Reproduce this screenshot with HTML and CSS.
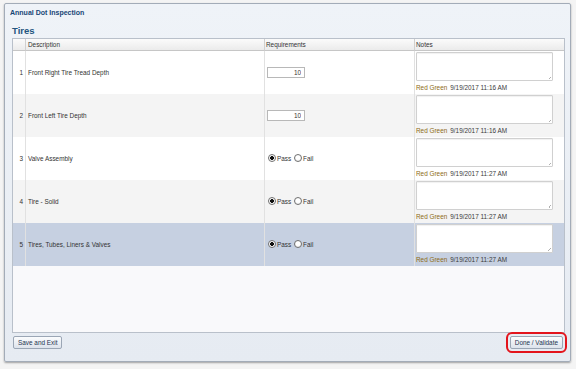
FILE: index.html
```html
<!DOCTYPE html>
<html lang="en">
<head>
    <meta charset="UTF-8">
    <meta name="viewport" content="width=device-width, initial-scale=1.0">
    <title>Annual Dot Inspection</title>
    <link rel="stylesheet" href="styles.css">
</head>
<body>
    <div class="dialog">
        <div class="dialog-title">Annual Dot Inspection</div>
        <h2 class="section-title">Tires</h2>
        <div class="grid-wrap">
            <table class="grid">
                <thead>
                    <tr>
                        <th class="c-num"></th>
                        <th class="c-desc">Description</th>
                        <th class="c-req">Requirements</th>
                        <th class="c-notes">Notes</th>
                    </tr>
                </thead>
                <tbody>
                    <tr>
                        <td class="num">1</td>
                        <td class="desc">Front Right Tire Tread Depth</td>
                        <td class="req"><input type="text" class="req-input" value="10"></td>
                        <td class="notes">
                            <textarea class="note-box"></textarea>
                            <div class="note-meta"><span class="who">Red Green</span><span class="when">9/19/2017 11:16 AM</span></div>
                        </td>
                    </tr>
                    <tr>
                        <td class="num">2</td>
                        <td class="desc">Front Left Tire Depth</td>
                        <td class="req"><input type="text" class="req-input" value="10"></td>
                        <td class="notes">
                            <textarea class="note-box"></textarea>
                            <div class="note-meta"><span class="who">Red Green</span><span class="when">9/19/2017 11:16 AM</span></div>
                        </td>
                    </tr>
                    <tr>
                        <td class="num">3</td>
                        <td class="desc">Valve Assembly</td>
                        <td class="req">
                            <label class="choice"><input type="radio" name="r3" checked>Pass</label>
                            <label class="choice"><input type="radio" name="r3">Fail</label>
                        </td>
                        <td class="notes">
                            <textarea class="note-box"></textarea>
                            <div class="note-meta"><span class="who">Red Green</span><span class="when">9/19/2017 11:27 AM</span></div>
                        </td>
                    </tr>
                    <tr>
                        <td class="num">4</td>
                        <td class="desc">Tire - Solid</td>
                        <td class="req">
                            <label class="choice"><input type="radio" name="r4" checked>Pass</label>
                            <label class="choice"><input type="radio" name="r4">Fail</label>
                        </td>
                        <td class="notes">
                            <textarea class="note-box"></textarea>
                            <div class="note-meta"><span class="who">Red Green</span><span class="when">9/19/2017 11:27 AM</span></div>
                        </td>
                    </tr>
                    <tr class="selected">
                        <td class="num">5</td>
                        <td class="desc">Tires, Tubes, Liners &amp; Valves</td>
                        <td class="req">
                            <label class="choice"><input type="radio" name="r5" checked>Pass</label>
                            <label class="choice"><input type="radio" name="r5">Fail</label>
                        </td>
                        <td class="notes">
                            <textarea class="note-box"></textarea>
                            <div class="note-meta"><span class="who">Red Green</span><span class="when">9/19/2017 11:27 AM</span></div>
                        </td>
                    </tr>
                </tbody>
            </table>
        </div>
        <div class="button-bar">
            <button class="btn">Save and Exit</button>
            <button class="btn btn-flagged">Done / Validate</button>
        </div>
    </div>
</body>
</html>
```

FILE: styles.css
```css
body {
    margin: 0;
    height: 369px;
    background: #f4f4f4;
    font-family: "Liberation Sans", Arial, sans-serif;
    font-size: 6.4px;
    color: #333;
    overflow: hidden;
}
.dialog {
    margin: 3px 0 0 4px;
    width: 567px;
    height: 359px;
    box-sizing: border-box;
    border: 1px solid #a3acb8;
    border-radius: 2px;
    background: linear-gradient(#eff3f8, #e6ebf2);
    box-shadow: 0 1px 2px rgba(0, 0, 0, 0.35);
    display: flex;
    flex-direction: column;
}
.dialog-title {
    padding: 4px 0 0 5px;
    font-size: 7px;
    line-height: 10px;
    font-weight: bold;
    color: #184676;
}
.section-title {
    margin: 7px 0 0 7px;
    font-size: 9.5px;
    line-height: 12px;
    font-weight: bold;
    color: #23557f;
}
.grid-wrap {
    flex: 1;
    margin: 1px 5px 0 7px;
    border: 1px solid #b9c0ca;
    background: #f9f9fb;
    overflow: hidden;
}
.grid {
    width: 100%;
    table-layout: fixed;
    border-collapse: separate;
    border-spacing: 0;
}
.grid th,
.grid td {
    box-sizing: border-box;
    padding: 0;
}
.grid th {
    height: 12px;
    padding-left: 1px;
    line-height: 11px;
    font-weight: normal;
    text-align: left;
    background: linear-gradient(#fbfbfb, #ebebeb);
    border-bottom: 1px solid #c6c6c6;
    border-right: 1px solid #d0d0d0;
}
.grid th:last-child {
    border-right: none;
}
.c-num { width: 13px; }
.c-desc { width: 239px; }
.c-req { width: 150px; }
.grid th.c-desc { padding-left: 2px; }
.grid tbody tr {
    height: 43px;
    background: #fff;
}
.grid tbody tr:nth-child(even) {
    background: #f4f4f4;
}
.grid tbody tr.selected {
    background: #c6d0e1;
}
.grid td {
    border-right: 1px solid #e1e1e1;
    vertical-align: middle;
}
.grid td:last-child {
    border-right: none;
}
.num {
    text-align: right;
    padding-right: 2px !important;
}
.desc {
    padding-left: 2px !important;
}
.req {
    padding-left: 2px !important;
}
.req-input {
    width: 38px;
    height: 11px;
    box-sizing: border-box;
    margin: 0;
    padding: 0 3px 0 0;
    border: 1px solid #b8b8b8;
    background: #fff;
    font-family: inherit;
    font-size: 6.4px;
    text-align: right;
    color: #333;
}
.choice {
    display: inline-flex;
    align-items: center;
}
.choice input {
    appearance: none;
    -webkit-appearance: none;
    width: 8px;
    height: 8px;
    margin: 0 1px 0 1px;
    border: 1px solid #707070;
    border-radius: 50%;
    background: radial-gradient(circle at 50% 40%, #fff 40%, #e4e4e4);
}
.choice input:checked {
    background: radial-gradient(circle, #111 0 1.6px, #fff 2.2px);
}
.notes {
    vertical-align: top !important;
    padding: 1px 0 2px 1px !important;
}
/* small dotted grip instead of the native resize handle */
.note-box {
    display: block;
    width: 137px;
    height: 29px;
    box-sizing: border-box;
    margin: 0 0 3px 0;
    border: 1px solid #d0d0d0;
    border-radius: 1px;
    box-shadow: inset 0 1px 1px rgba(0, 0, 0, 0.06);
    resize: none;
    background-color: #fff;
    background-image: linear-gradient(135deg, transparent 0 62%, #b0b0b0 62% 70%, transparent 70% 80%, #b0b0b0 80% 88%, transparent 88%);
    background-size: 5px 5px;
    background-position: right 1px bottom 1px;
    background-repeat: no-repeat;
}
.note-meta {
    height: 8px;
    line-height: 8px;
    white-space: nowrap;
}
.who {
    color: #8d6b16;
    margin-right: 3px;
}
.when {
    color: #3a3a3a;
}
.button-bar {
    height: 28px;
    box-sizing: border-box;
    padding: 3px 7px 0 8px;
    display: flex;
    justify-content: space-between;
    align-items: flex-start;
}
.btn {
    height: 13px;
    padding: 0 4px;
    border: 1px solid #9ba6b5;
    border-radius: 2px;
    background: linear-gradient(#fbfcfd, #dde3ec);
    font-family: inherit;
    font-size: 6.4px;
    line-height: 11px;
    color: #1e3550;
}
.btn-flagged {
    outline: 2px solid #e3141c;
    outline-offset: 2px;
    border-radius: 2px;
}
```
